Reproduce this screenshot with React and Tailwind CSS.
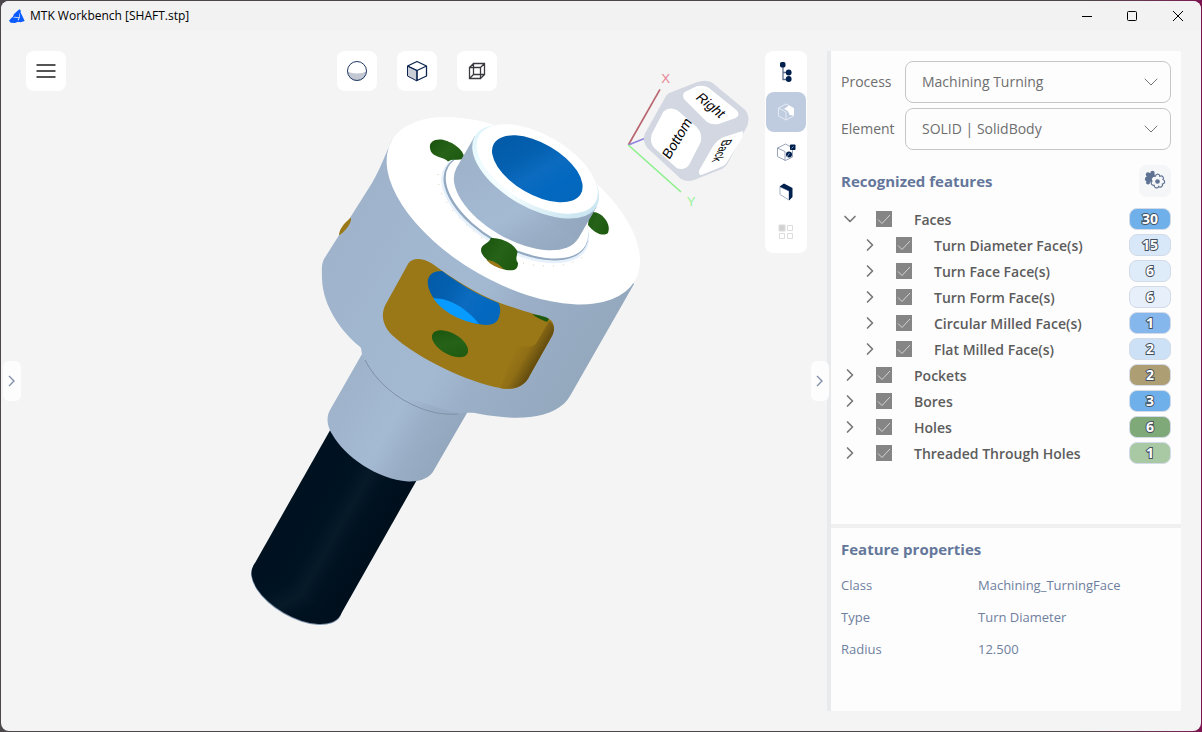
import { useState } from "react";
import { ChevronDown, ChevronRight } from "lucide-react";
import clsx from "clsx";

const FEATURES = [
  { id: "faces", name: "Faces", count: 30, open: true, badge: "bg-[#6fb0ea]" },
  { id: "turn-diameter", name: "Turn Diameter Face(s)", count: 15, child: true, badge: "bg-[#d9e8f8]" },
  { id: "turn-face", name: "Turn Face Face(s)", count: 6, child: true, badge: "bg-[#deebf9]" },
  { id: "turn-form", name: "Turn Form Face(s)", count: 6, child: true, badge: "bg-[#e6effa]" },
  { id: "circular", name: "Circular Milled Face(s)", count: 1, child: true, badge: "bg-[#85b7ed]" },
  { id: "flat", name: "Flat Milled Face(s)", count: 2, child: true, badge: "bg-[#cce1f6]" },
  { id: "pockets", name: "Pockets", count: 2, badge: "bg-[#ae9e74]" },
  { id: "bores", name: "Bores", count: 3, badge: "bg-[#6fb0ea]" },
  { id: "holes", name: "Holes", count: 6, badge: "bg-[#80a979]" },
  { id: "threaded", name: "Threaded Through Holes", count: 1, badge: "bg-[#a9c9a4]" },
];

const PROPERTIES = [
  ["Class", "Machining_TurningFace"],
  ["Type", "Turn Diameter"],
  ["Radius", "12.500"],
];

const TitleBar = () => (
  <header className="flex h-[30px] items-center justify-between bg-[#f2f2f2] pl-2">
    <div className="flex items-center gap-[5px]">
      <svg viewBox="0 0 48 42" className="h-[14px] w-4" fill="#0b5cff">
        <path d="M15 15 31 1l5 4-5 11-1 9-14-2-6 4z" />
        <path d="m33 7 7 14 7 15-12 4-9-2 6-11z" />
        <path d="m0 35 9-10 20 2-3 6 5 4-13 5-13-1z" />
      </svg>
      <h1 className="text-xs text-black">MTK Workbench [SHAFT.stp]</h1>
    </div>
    <div className="flex">
      <button aria-label="Minimize" className="flex h-[30px] w-[45px] items-center justify-center">
        <svg width="10" height="10" viewBox="0 0 10 10" stroke="#000"><path d="M0 5.5h10" /></svg>
      </button>
      <button aria-label="Maximize" className="flex h-[30px] w-[46px] items-center justify-center">
        <svg width="10" height="10" viewBox="0 0 10 10" fill="none" stroke="#000"><rect x=".5" y=".5" width="9" height="9" rx="1" /></svg>
      </button>
      <button aria-label="Close" className="flex h-[30px] w-[46px] items-center justify-center">
        <svg width="10" height="10" viewBox="0 0 10 10" stroke="#000"><path d="m0 0 10 10M10 0 0 10" /></svg>
      </button>
    </div>
  </header>
);

// Shaded shaft, drawn back to front: thread, neck, flange, pocket, hub.
const ShaftModel = () => (
  <svg viewBox="1 31 826 700" className="absolute inset-0 h-full w-full" role="img" aria-label="Shaft model">
    <defs>
      <linearGradient id="body" gradientUnits="userSpaceOnUse" x1="355" y1="200" x2="600" y2="341">
        <stop offset="0" stopColor="#9fb3cb" />
        <stop offset=".25" stopColor="#a1b6cf" />
        <stop offset=".55" stopColor="#a3b9d2" />
        <stop offset=".68" stopColor="#9bb0c8" />
        <stop offset="1" stopColor="#94a8be" />
      </linearGradient>
      <linearGradient id="neck" gradientUnits="userSpaceOnUse" x1="330" y1="410" x2="434" y2="470">
        <stop offset="0" stopColor="#9fb3cb" />
        <stop offset=".5" stopColor="#a4bad3" />
        <stop offset=".75" stopColor="#99adc5" />
        <stop offset="1" stopColor="#93a7be" />
      </linearGradient>
      <linearGradient id="hub" gradientUnits="userSpaceOnUse" x1="456" y1="168" x2="578" y2="238">
        <stop offset="0" stopColor="#9eb2ca" />
        <stop offset=".55" stopColor="#a4bad3" />
        <stop offset=".78" stopColor="#99adc5" />
        <stop offset="1" stopColor="#93a7be" />
      </linearGradient>
      <linearGradient id="thread" gradientUnits="userSpaceOnUse" x1="253" y1="565" x2="340" y2="615">
        <stop offset="0" stopColor="#001120" />
        <stop offset=".4" stopColor="#001323" />
        <stop offset=".56" stopColor="#071a28" />
        <stop offset=".72" stopColor="#001120" />
        <stop offset="1" stopColor="#000f1c" />
      </linearGradient>
      <linearGradient id="bore" gradientUnits="userSpaceOnUse" x1="495" y1="150" x2="580" y2="198">
        <stop offset="0" stopColor="#035ba8" />
        <stop offset=".3" stopColor="#0460b0" />
        <stop offset=".5" stopColor="#0c6bbf" />
        <stop offset=".7" stopColor="#0369c0" />
        <stop offset="1" stopColor="#0266bb" />
      </linearGradient>
      <linearGradient id="wall" gradientUnits="userSpaceOnUse" x1="510" y1="357" x2="534" y2="371">
        <stop offset="0" stopColor="#9b7817" />
        <stop offset=".45" stopColor="#8f6e15" />
        <stop offset="1" stopColor="#5d470d" />
      </linearGradient>
      <linearGradient id="hole" x1="0" y1=".2" x2="1" y2=".8">
        <stop offset="0" stopColor="#1b550e" />
        <stop offset=".5" stopColor="#266318" />
        <stop offset="1" stopColor="#1d5a0f" />
      </linearGradient>
      <linearGradient id="chamfer" gradientUnits="userSpaceOnUse" x1="475" y1="130" x2="590" y2="210">
        <stop offset="0" stopColor="#d9f2fa" />
        <stop offset=".3" stopColor="#eefcff" />
        <stop offset=".6" stopColor="#f4fdff" />
        <stop offset="1" stopColor="#c5e3ef" />
      </linearGradient>
    </defs>

    <ellipse cx="296.5" cy="591.5" rx="50.3" ry="25.7" transform="rotate(30 296.5 591.5)" fill="#7f93ad" />
    <ellipse cx="296.7" cy="590.7" rx="50" ry="25.6" transform="rotate(30 296.7 590.7)" fill="url(#thread)" />
    <path d="M253.4 565.7 340 615.7 425.300 465 338.700 415z" fill="url(#thread)" />

    <path d="M362 354 330 410C326 417 327 426 332 434 345 457 377 479 408 481.500 420 482 430 478 434 470L471 406z" fill="url(#neck)" />

    <path
      d="M391.700 140.700C386 153 381 167 372 183L324 259C321 265 322 272 322 279 323 307 342 332 359 346 362 348 361 350 362 354 369 367 381 383 400 395L452 412C462 414 468 412 475 413 490 416 511 419 530 417 549 415 564 407 570 396L634 284 513 150z"
      fill="url(#body)"
    />
    <path d="M365 360C376 382 397 399 420 408 433 413 445 415 458 414" fill="none" stroke="#7f92a8" strokeWidth="1" />
    <path d="M351 217.500C352 224 344 232 339 235.500 339 230 343 224 351 217.500z" fill="#9b7817" />

    <ellipse cx="513.3" cy="210.7" rx="140.3" ry="71.7" transform="rotate(30 513.3 210.7)" fill="#fff" />

    {/* milled pocket */}
    <path
      d="M408.300 263.500C412 258 421 257 432 263.500 452 278 475 293 500 303 516 309 535 314 549 319 555 322 555 330 552 336L530 375C525 386 515 391 500 388 468 382 418 359 392 335 382 325 380 313 387 302z"
      fill="#9b7817"
    />
    <path d="M549 321C555 324 555 330 552 336L530 375C525 386 515 391 500 388 507 374 510 360 516 344 527 348 533 348 537 342z" fill="url(#wall)" />
    <path d="M532 314C539 315 547 317 549 319L547 322C542 320 537 318 532 314z" fill="#1d5a0f" />
    <path d="M442 271C434 271 428 274 427.700 282 428 296 442 310 458 317 475 325 491 328 497 321 501 315 501 308 498.500 303 477 295 457 282 442 271z" fill="url(#bore)" />
    <path d="M433.300 298.300C450 298 467 309 479 324 463 322 443 313 433.300 298.300z" fill="#089bff" />
    <ellipse cx="450" cy="343.7" rx="20" ry="10.500" transform="rotate(30 450 343.7)" fill="url(#hole)" />

    {/* relief groove round the hub */}
    <ellipse cx="515.3" cy="208.5" rx="82" ry="42" transform="rotate(30 515.3 208.5)" fill="#e6f1fb" />
    <ellipse cx="515.9" cy="207" rx="80.200" ry="40.800" transform="rotate(30 515.9 207)" fill="#93a9c1" />
    <ellipse cx="517" cy="206" rx="79" ry="40" transform="rotate(30 517 206)" fill="#fff" />
    <g fill="none" stroke="#c9b98f" strokeWidth=".7" strokeDasharray="1 9">
      <path d="M438 174C437 194 450 213 484 240" />
      <path d="M523 263C548 269 573 266 584 256" />
    </g>

    {/* drilled holes */}
    <path d="M430 148C429 142 434 139 441 139.500 452 141 464 150 464 157 463 161 457 159 451 160L448 161.500C443 156 431 158 430 148z" fill="url(#hole)" />
    <path d="M590 200C590 207 589 216 588 225 594 233 603 237 608 233 612 224 602 212 593 212z" fill="url(#hole)" />
    <path d="M490.700 238C501 237 515 244 517.500 252 517 256 515 259 518 263 518 270 514 271 506 270 494 267 481 257 481 250 481 244 490 243 490.700 238z" fill="url(#hole)" />
    <path d="M486.500 260C493 260 499 264 504 269.500 497 268 491 265 486.500 260z" fill="#9b7817" />

    <ellipse cx="517.3" cy="203.3" rx="70.3" ry="36" transform="rotate(30 517.3 203.3)" fill="url(#hub)" />
    <path d="M474.700 136.300 596.700 206.700 578.300 238.500 456.300 168.300z" fill="url(#hub)" />
    <ellipse cx="535.7" cy="171.5" rx="70.3" ry="36" transform="rotate(30 535.7 171.5)" fill="url(#chamfer)" />
    <ellipse cx="537.2" cy="169" rx="67" ry="34.300" transform="rotate(30 537.2 169)" fill="#fff" />
    <ellipse cx="537.3" cy="168.8" rx="50.2" ry="25.6" transform="rotate(30 537.3 168.8)" fill="url(#bore)" />
  </svg>
);

const ViewCube = () => (
  <svg viewBox="66 48 411 438" className="mt-[15px] h-[146px] w-[137px] shrink-0" role="img" aria-label="View cube">
    <path d="M85 285 180 118" stroke="#b9656f" strokeWidth="5" />
    <path d="M85 285 135 265" stroke="#8f83e0" strokeWidth="5" />
    <path d="M85 285 243 426" stroke="#8df08d" strokeWidth="5" />
    <path
      d="M206 130 290 97Q315 88 335 97L436 180Q450 197 443 225L384 338Q378 352 360 359L280 391Q260 397 242 386L143 295Q126 275 134 252L190 152Q196 137 206 130z"
      fill="#d2d7e1"
    />
    <path d="M254 126 290 109Q310 104 326 113L409 180Q424 194 407 204L358 221Q337 226 320 215L254 149Q244 137 254 126z" fill="#fff" />
    <path d="M190 185Q208 168 232 181L290 231Q309 252 302 277L267 345Q254 362 231 355L163 294Q148 279 155 253z" fill="#fff" />
    <path d="M428 243Q431 250 424 267L378 341Q370 350 354 355L304 375Q294 376 298 360L338 290Q353 268 372 261z" fill="#fff" />
    <g fontFamily="'Liberation Sans', Arial, sans-serif">
      <text transform="translate(208 331) rotate(-59) skewX(-8)" fontSize="42">Bottom</text>
      <text transform="translate(284 145) rotate(39) skewX(-12)" fontSize="41">Right</text>
      <text transform="translate(370 270) rotate(118) skewX(35)" fontSize="34">Back</text>
      <text x="184" y="99" fontSize="40" fill="#e88594">X</text>
      <text x="260" y="469" fontSize="40" fill="#9af39a">Y</text>
    </g>
  </svg>
);

const SphereIcon = () => (
  <svg width="22" height="22" viewBox="0 0 22 22" fill="none">
    <path d="M1.500 11.500c5 2.600 14 2.600 19 0a9.500 9.500 0 0 1-19 0z" fill="#c3c8d2" />
    <circle cx="11" cy="11" r="9.500" stroke="#1f3864" />
  </svg>
);

const CubeIcon = () => (
  <svg width="22" height="22" viewBox="0 0 22 22" fill="none" stroke="#0b2450" strokeLinejoin="round">
    <path d="m1.500 6 9.500 4.500V21l-9.500-5z" fill="#c8cdd6" />
    <path d="m1.500 6 9.500-4.500L20.500 6v10L11 20.500V10.500L20.500 6M11 10.500 1.500 6" strokeWidth="1.300" />
  </svg>
);

const WireIcon = () => (
  <svg width="18" height="18" viewBox="0 0 18 18" fill="none" stroke="#3c3940" strokeWidth="1.300">
    <path d="M1.500 5.500h11v11h-11zM5.500 1.500h11v11h-11zM1.500 5.500l4-4M12.500 5.500l4-4M1.500 16.500l4-4M12.500 16.500l4-4" />
  </svg>
);

const TreeIcon = () => (
  <svg width="14" height="22" viewBox="0 0 14 22">
    <path d="M4 4v14.500h6M4 11.500h6" fill="none" stroke="#5d6f8c" strokeWidth="1.300" />
    <g fill="#00204d"><rect x="1" y="1" width="5.500" height="5.500" rx="1.800" /><circle cx="9.700" cy="11.500" r="2.900" /><circle cx="9.700" cy="18" r="2.900" /></g>
  </svg>
);

const ShadedIcon = () => (
  <svg width="20" height="20" viewBox="0 0 20 20" fill="none" stroke="#e4eaf3">
    <path d="m2.500 6 7.500-4 7.500 4v8L10 18l-7.500-4zM2.500 6 10 10v8" />
    <path d="m8 7 5-3.500 5 3v7L13.500 13c-.5-3-2-5-5.500-6z" fill="#fff" stroke="none" />
  </svg>
);

const MeasureIcon = () => (
  <svg width="20" height="20" viewBox="0 0 20 20" fill="none" stroke="#8e9bb1" strokeWidth=".9">
    <path d="m1.500 6 8-4 7 4v9l-7 3.500-8-4zM1.500 6l7.500 3.500v9" />
    <g fill="#00204d" stroke="none"><rect x="14" y="2.500" width="5.500" height="5.500" rx=".8" /><circle cx="13" cy="12.500" r="3" /></g>
    <path d="m11 15 2.500-4M15.500 6.500l2-2" stroke="#8fa0ba" />
  </svg>
);

const SectionIcon = () => (
  <svg width="20" height="20" viewBox="0 0 20 20" fill="none">
    <path d="m4 5 9 4v9l-9-5.500z" fill="#fff" stroke="#a5b0c2" />
    <path d="m3.500 4.500 4.500-3 8.500 4.500v9L13 18.500V9z" fill="#00204d" />
  </svg>
);

const GridIcon = () => (
  <svg width="16" height="16" viewBox="0 0 16 16" fill="none" stroke="#dcdcdc">
    <path d="M1 1h6v6H1z" fill="#d1d1d1" /><path d="M9.500 1.500h5v5h-5zM1.500 9.500h5v5h-5zM9.500 9.500h5v5h-5z" />
  </svg>
);

const GearsIcon = () => (
  <svg width="22" height="22" viewBox="0 0 22 22">
    <g fill="#5e7293">
      <circle cx="7" cy="7.500" r="4.500" /><circle cx="8.500" cy="3" r="2.200" /><circle cx="4" cy="4.500" r="2.200" />
      <circle cx="3" cy="9" r="2.200" /><circle cx="4" cy="12.500" r="2" />
    </g>
    <path
      d="M11.500 6.200c.3-2.700 4-2.700 4.300 0 2.300-1.300 4.600 1.200 3.200 3.300 2.500.9 2 4.400-.6 4.500.8 2.500-2.200 4.200-3.700 2.400-1.200 2.500-4.800 1.700-4.500-1-2.600.4-4.100-2.800-2.200-4.300-1.900-1.900 0-5.200 3.500-4.900z"
      fill="#f5f6f8" stroke="#5e7293" strokeWidth="1.200"
    />
    <circle cx="13.500" cy="11.500" r="2.300" fill="#5e7293" />
  </svg>
);

const VIEW_MODES = [
  { name: "Shaded", Icon: SphereIcon },
  { name: "Shaded with edges", Icon: CubeIcon },
  { name: "Wireframe", Icon: WireIcon },
];

const TOOLS = [
  { name: "Model tree", Icon: TreeIcon },
  { name: "Features", Icon: ShadedIcon },
  { name: "Measure", Icon: MeasureIcon },
  { name: "Section", Icon: SectionIcon },
  { name: "Layout", Icon: GridIcon, disabled: true },
];

const Viewport = () => {
  const [tool, setTool] = useState("Features");

  return (
    <main className="relative min-w-0 flex-1">
      <ShaftModel />
      <div className="relative grid grid-cols-[1fr_auto_1fr] items-start pt-5 pr-5 pl-[25px]">
        <button aria-label="Menu" className="flex size-10 items-center justify-center rounded-lg bg-white">
          <svg width="20" height="16" viewBox="0 0 20 16" stroke="#1c1c1c" strokeWidth="1.500"><path d="M.5 2h19M.5 8h19M.5 14h19" /></svg>
        </button>
        <div className="flex gap-5">
          {VIEW_MODES.map(({ name, Icon }) => (
            <button key={name} aria-label={name} className="flex size-10 items-center justify-center rounded-lg bg-white">
              <Icon />
            </button>
          ))}
        </div>
        <div className="flex items-start justify-end gap-1.5">
          <ViewCube />
          <div className="flex flex-col rounded-lg bg-white p-px">
            {TOOLS.map(({ name, Icon, disabled }) => (
              <button
                key={name}
                aria-label={name}
                disabled={disabled}
                onClick={() => setTool(name)}
                className={clsx("flex size-10 items-center justify-center rounded-lg", tool === name && "bg-[#bfcce0]")}
              >
                <Icon />
              </button>
            ))}
          </div>
        </div>
      </div>
      <button aria-label="Show left panel" className="absolute top-1/2 left-0.5 flex h-10 w-[18px] -translate-y-1/2 items-center justify-center rounded-md bg-[#fdfdfd]">
        <svg width="8" height="12" viewBox="0 0 8 12" fill="none" stroke="#8190a8" strokeWidth="1.400"><path d="m1 1 5 5-5 5" /></svg>
      </button>
      <button aria-label="Hide right panel" className="absolute top-1/2 -right-0.5 z-10 flex h-10 w-[18px] -translate-y-1/2 items-center justify-center rounded-md bg-[#fdfdfd]">
        <svg width="8" height="12" viewBox="0 0 8 12" fill="none" stroke="#8190a8" strokeWidth="1.400"><path d="m1 1 5 5-5 5" /></svg>
      </button>
    </main>
  );
};

const SelectRow = ({ id, label, value }) => (
  <div className="flex items-center">
    <label htmlFor={id} className="w-16 text-sm text-[#6e6e6e]">{label}</label>
    <div className="grid flex-1 items-center">
      <select id={id} className="col-start-1 row-start-1 h-[42px] w-full appearance-none rounded-lg border border-[#c6c6c6] bg-[#fdfdfd] px-4 text-sm text-[#6e6e6e]">
        <option>{value}</option>
      </select>
      <ChevronDown size={24} strokeWidth={1} className="pointer-events-none col-start-1 row-start-1 mr-2 justify-self-end text-[#777]" />
    </div>
  </div>
);

const FeatureRow = ({ feature, checked, onToggle }) => {
  const Chevron = feature.open ? ChevronDown : ChevronRight;

  return (
    <li className={clsx("flex h-[26px] items-center", feature.child && "pl-5")}>
      <button aria-label={`Expand ${feature.name}`} className="text-[#777]">
        <Chevron size={20} strokeWidth={2} className="-mx-px" />
      </button>
      <span className="ml-[17px] grid">
        <input
          id={feature.id}
          type="checkbox"
          checked={checked}
          onChange={onToggle}
          className="col-start-1 row-start-1 size-4 appearance-none border border-[#858585] checked:bg-[#858585]"
        />
        {checked && (
          <svg viewBox="0 0 16 16" className="pointer-events-none col-start-1 row-start-1 size-4" fill="none" stroke="#d4d4d4">
            <path d="m2 8.500 4 4 8-8.500" />
          </svg>
        )}
      </span>
      <label htmlFor={feature.id} className="ml-[22px] flex-1 pt-0.5 text-sm font-semibold text-[#5c5c5c]">{feature.name}</label>
      <span
        className={clsx(
          "flex h-[22px] w-[42px] items-center justify-center rounded-lg border border-[#d3dbe8] text-sm font-bold text-white [-webkit-text-stroke:2px_#44515f] [paint-order:stroke_fill]",
          feature.badge
        )}
      >
        {feature.count}
      </span>
    </li>
  );
};

const SidePanel = () => {
  const [hidden, setHidden] = useState([]);

  const toggle = (id) => {
    setHidden(hidden.includes(id) ? hidden.filter((h) => h !== id) : [...hidden, id]);
  };

  return (
    <aside className="mt-5 mr-5 mb-5 flex w-[354px] shrink-0 flex-col border-l-4 border-[#e9eaec] bg-[#fdfdfd]">
      <section className="flex-1 px-[10px] pt-[10px]">
        <div className="flex flex-col gap-[5px]">
          <SelectRow id="process" label="Process" value="Machining Turning" />
          <SelectRow id="element" label="Element" value="SOLID | SolidBody" />
        </div>
        <div className="mt-[15px] flex items-center justify-between">
          <h2 className="text-[15px] font-bold text-[#64779a]">Recognized features</h2>
          <button aria-label="Recognition settings" className="flex size-8 items-center justify-center rounded-lg bg-[#f5f6f8]">
            <GearsIcon />
          </button>
        </div>
        <ul className="mt-[9px]">
          {FEATURES.map((feature) => (
            <FeatureRow
              key={feature.id}
              feature={feature}
              checked={!hidden.includes(feature.id)}
              onToggle={() => toggle(feature.id)}
            />
          ))}
        </ul>
      </section>
      <section className="border-t-4 border-[#f0f0f1] px-[10px] pt-[7px] pb-[46px] text-[#6f809e]">
        <h2 className="text-[15px] leading-7 font-bold text-[#64779a]">Feature properties</h2>
        <dl className="mt-[6px] grid grid-cols-[137px_1fr] text-[13px] leading-8">
          {PROPERTIES.map(([name, value]) => (
            <div key={name} className="contents">
              <dt>{name}</dt>
              <dd>{value}</dd>
            </div>
          ))}
        </dl>
      </section>
    </aside>
  );
};

const App = () => (
  <div className="flex min-h-screen flex-col bg-linear-to-r from-[#4b474b] from-90% to-[#7c1450] p-px font-['Open_Sans','Noto_Sans',sans-serif]">
    <div className="flex flex-1 flex-col overflow-hidden rounded-lg bg-[#f4f4f4]">
      <TitleBar />
      <div className="flex flex-1">
        <Viewport />
        <SidePanel />
      </div>
    </div>
  </div>
);

export default App;
